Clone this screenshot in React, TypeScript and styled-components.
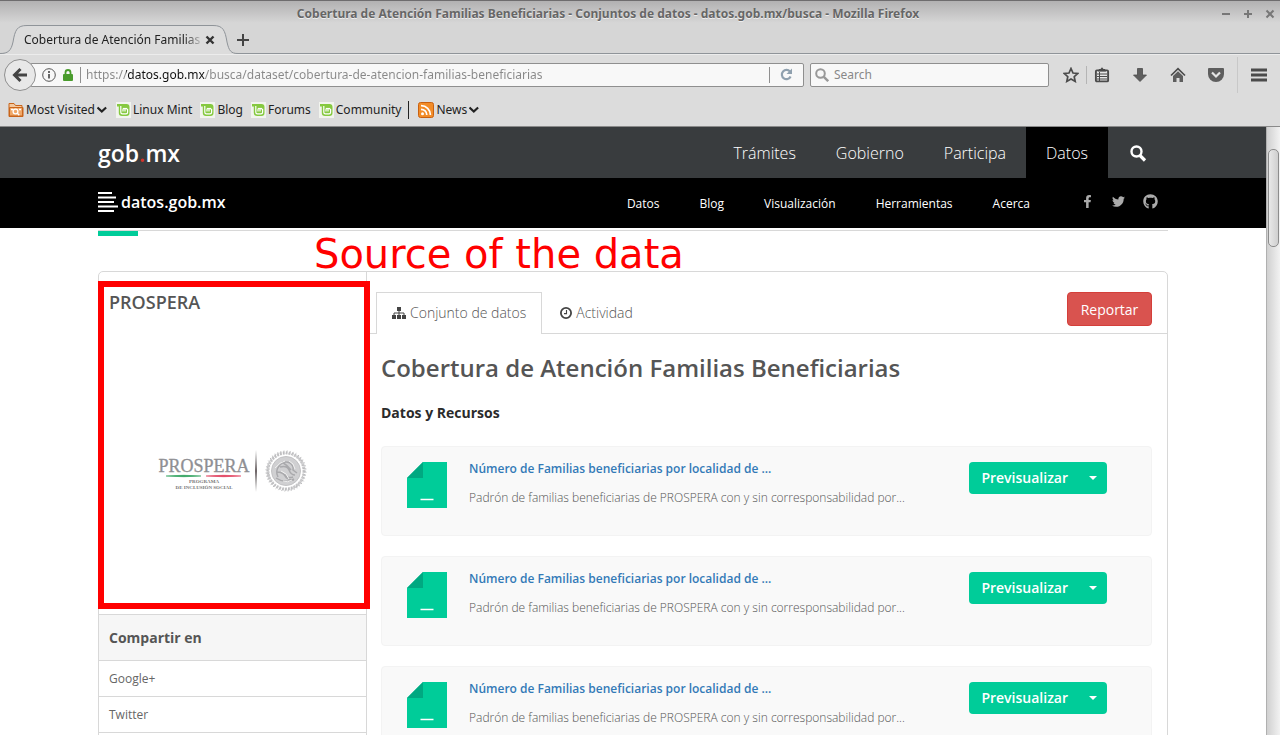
import React from "react";
import styled, { createGlobalStyle, css } from "styled-components";
import { FaFacebookF, FaTwitter, FaGithub } from "react-icons/fa";

const uiFont = '"Noto Sans", "DejaVu Sans", sans-serif';
const webFont = '"Open Sans", "Noto Sans", sans-serif';
const line = "#d8d8d8";
const teal = "#00cc99";

const GlobalStyle = createGlobalStyle`
  *, *::before, *::after { box-sizing: border-box; }
  body { margin: 0; font-family: ${webFont}; color: #555; background: #fff; }
  h1, h2, h3, p, ul { margin: 0; padding: 0; }
  ul { list-style: none; }
  a { color: inherit; text-decoration: none; }
  button { font: inherit; color: inherit; border: 0; padding: 0; background: none; cursor: pointer; }
  svg { display: block; flex: none; }
`;

const Window = styled.div`
  display: flex;
  flex-direction: column;
  height: 100vh;
  overflow: hidden;
`;

/* ---------- browser chrome ---------- */

const Chrome = styled.header`
  flex: none;
  font-family: ${uiFont};
  font-size: 12px;
  line-height: 16px;
  color: #222;
  background: #dcdcdc;
  border-bottom: 1px solid #8a8a8a;
`;

const TitleBar = styled.div`
  display: grid;
  grid-template-columns: 1fr 64px;
  align-items: center;
  height: 25px;
  padding-top: 2px;
  border-top: 1px solid #6e6c6e;
  background: linear-gradient(#b2b1b2, #d6d6d6 22px);
`;

const WindowTitle = styled.div`
  text-align: center;
  font-weight: 700;
  color: #666;
  text-shadow: 0 1px 0 #eee;
  white-space: nowrap;
  overflow: hidden;
`;

const WindowButtons = styled.div`
  display: flex;
  justify-content: flex-end;
  gap: 12px;
  padding-right: 5px;
`;

const TabStrip = styled.div`
  display: flex;
  align-items: stretch;
  height: 29px;
  background: #d6d6d6;
  box-shadow: inset 0 -1px 0 #8f9499;
`;

const BrowserTab = styled.div`
  position: relative;
  display: flex;
  align-items: center;
  gap: 4px;
  width: 236px;
  padding: 0 21px 0 24px;
`;

const TabShape = styled.svg`
  position: absolute;
  left: 0;
  top: 0;
`;

const TabLabel = styled.span`
  position: relative;
  flex: 1;
  white-space: nowrap;
  mask-image: linear-gradient(to right, #000 160px, transparent 180px);
`;

const TabClose = styled.button`
  position: relative;
`;

const NavBar = styled.div`
  display: flex;
  align-items: center;
  height: 40px;
  padding: 0 13px 0 4px;
  border-top: 1px solid #ececec;
`;

const BackButton = styled.button`
  position: relative;
  z-index: 1;
  flex: none;
  display: grid;
  place-items: center;
  width: 32px;
  height: 32px;
  border: 1px solid #8f8f8f;
  border-radius: 50%;
  background: #e8e8e8;
`;

const Field = styled.div<{ $url?: boolean }>`
  display: flex;
  align-items: center;
  height: 24px;
  border: 1px solid #8f8f8f;
  border-radius: 2px;
  background: #f8f8f8;
  ${(p) =>
    p.$url
      ? css`
          flex: 1;
          margin-left: -6px;
          margin-right: 6px;
          padding: 0 10px 0 11px;
        `
      : css`
          width: 239px;
          gap: 5px;
          padding: 0 4px;
          margin-right: 14px;
        `}
`;

const TextInput = styled.input`
  flex: 1;
  min-width: 0;
  border: 0;
  outline: 0;
  padding: 0;
  background: none;
  font: 12px/16px ${uiFont};
  color: #888;
  &::placeholder {
    color: #888;
    opacity: 1;
  }
`;

const UrlInput = styled(TextInput)`
  margin-left: 5px;
  background: linear-gradient(to right, #888 40px, #111 40px, #111 119px, #888 119px);
  background-clip: text;
  -webkit-background-clip: text;
  -webkit-text-fill-color: transparent;
`;

const Rule = styled.span<{ $h: number; $c?: string }>`
  flex: none;
  width: 1px;
  height: ${(p) => p.$h}px;
  background: ${(p) => p.$c ?? "#8f8f8f"};
`;

const Tools = styled.div`
  display: flex;
  align-items: center;
  gap: 22px;
  color: #4b4b4b;
`;

const ToolPair = styled.div<{ $gap?: number }>`
  display: flex;
  align-items: center;
  gap: ${(p) => p.$gap ?? 7}px;
`;

const MenuTools = styled.div`
  display: flex;
  align-items: center;
  gap: 13px;
  margin-left: -9px;
`;

const Bookmarks = styled.nav`
  display: flex;
  align-items: center;
  height: 32px;
  padding: 0 8px;
`;

const Bookmark = styled.a`
  display: flex;
  align-items: center;
  gap: 2px;
  margin-right: 7px;
  white-space: nowrap;
`;

const BookmarkRule = styled(Rule)`
  margin-right: 9px;
`;

/* ---------- web page ---------- */

const Viewport = styled.div`
  flex: 1;
  min-height: 0;
  display: flex;
`;

const Page = styled.div`
  flex: 1;
  min-width: 0;
  overflow: hidden;
`;

const ScrollTrack = styled.div`
  flex: none;
  width: 14px;
  padding: 22px 1px 0;
  border-left: 1px solid #b0b0b0;
  background: linear-gradient(to right, #d0d0d0, #f2f2f2);
`;

const ScrollThumb = styled.div`
  height: 98px;
  border: 1px solid #8c8c8c;
  border-radius: 5px;
  background: linear-gradient(to right, #e8e8e8, #cfcfcf);
`;

const Container = styled.div`
  max-width: 1070px;
  margin: 0 auto;
`;

const GovBar = styled.div`
  background: #393c3e;
`;

const DataBar = styled.div`
  background: #000;
  color: #fff;
`;

const BarRow = styled(Container)`
  display: flex;
  align-items: center;
  justify-content: space-between;
  height: 51px;
`;

const DataRow = styled(BarRow)`
  height: 50px;
  padding-bottom: 2px;
`;

const GovLogo = styled.a`
  font-size: 23px;
  line-height: 32px;
  font-weight: 600;
  color: #fff;
  em {
    font-style: normal;
    color: #d0352b;
  }
`;

const GovNav = styled.nav`
  display: flex;
  align-self: stretch;
`;

const GovLink = styled.a<{ $active?: boolean }>`
  display: flex;
  align-items: center;
  padding: 0 20px;
  font-size: 16px;
  line-height: 24px;
  font-weight: 300;
  color: #fff;
  background: ${(p) => (p.$active ? "#000" : "transparent")};
`;

const DataLogo = styled.a`
  display: flex;
  align-items: center;
  gap: 3px;
  font-size: 16px;
  line-height: 20px;
  font-weight: 600;
`;

const DataNav = styled.nav`
  display: flex;
  align-items: center;
  gap: 40px;
  padding-top: 4px;
  font-size: 12px;
  line-height: 16px;
`;

const Social = styled.div`
  display: flex;
  align-items: center;
  gap: 18px;
  padding: 0 10px 6px 11px;
  color: #aaa;
`;

const Heading = styled(Container)`
  position: relative;
  height: 43px;
  padding-top: 2px;
  &::before {
    content: "";
    display: block;
    border-top: 1px solid ${line};
  }
  &::after {
    content: "";
    display: block;
    width: 40px;
    height: 5px;
    background: ${teal};
  }
`;

const Note = styled.p`
  position: absolute;
  left: 216px;
  top: 2px;
  font: 40px/48px "DejaVu Sans", sans-serif;
  color: #f00;
  white-space: nowrap;
`;

const Card = styled(Container)`
  display: flex;
  border: 1px solid ${line};
  border-radius: 5px;
`;

const Sidebar = styled.aside`
  flex: none;
  width: 268px;
  border-right: 1px solid ${line};
`;

const Organization = styled.section`
  position: relative;
  display: flex;
  flex-direction: column;
  height: 342px;
  padding: 18px 10px 0;
`;

const NoteFrame = styled.div`
  position: absolute;
  inset: 9px -4px 5px -1px;
  border: 6px solid #f00;
`;

const OrgName = styled.h2`
  font-size: 18px;
  line-height: 24px;
  font-weight: 600;
`;

const OrgLogo = styled.svg`
  margin: 135px auto 0;
`;

const ShareTitle = styled.h3`
  padding: 12px 10px 11px;
  border-top: 1px solid ${line};
  border-bottom: 1px solid ${line};
  background: #f6f6f6;
  font-size: 14px;
  line-height: 22px;
`;

const ShareItem = styled.li`
  padding: 10px 10px 9px;
  border-bottom: 1px solid ${line};
  font-size: 12px;
  line-height: 16px;
  color: #666;
`;

const Main = styled.main`
  flex: 1;
  min-width: 0;
`;

const Tabs = styled.div`
  display: flex;
  align-items: flex-end;
  height: 62px;
  padding: 0 15px 0 9px;
  box-shadow: inset 0 -1px 0 ${line};
`;

const Tab = styled.a<{ $active?: boolean }>`
  display: flex;
  align-items: center;
  gap: 4px;
  height: 42px;
  padding: 0 15px 1px;
  border: 1px solid ${(p) => (p.$active ? line : "transparent")};
  border-bottom: 0;
  background: ${(p) => (p.$active ? "#fff" : "transparent")};
  margin-right: 2px;
  font-size: 14px;
  line-height: 20px;
  font-weight: 300;
  svg {
    color: #444;
  }
`;

const ReportButton = styled.button`
  margin: 0 0 8px auto;
  height: 34px;
  min-width: 85px;
  padding: 0 12px;
  border: 1px solid #d43f3a;
  border-radius: 4px;
  background: #d9534f;
  color: #fff;
  font-size: 14px;
`;

const Body = styled.div`
  padding: 18px 15px 0 14px;
`;

const Title = styled.h1`
  font-size: 24px;
  line-height: 32px;
  font-weight: 600;
`;

const Subtitle = styled.h2`
  margin: 19px 0 23px;
  font-size: 14px;
  line-height: 20px;
  font-weight: 700;
  color: #2b2b2b;
`;

const Resource = styled.li`
  display: flex;
  align-items: flex-start;
  height: 90px;
  margin-bottom: 20px;
  padding: 15px 44px 0 25px;
  border: 1px solid #f3f3f3;
  border-radius: 4px;
  background: #f9f9f9;
`;

const ResourceText = styled.div`
  flex: 1;
  min-width: 0;
  margin-left: 22px;
  font-size: 12px;
  line-height: 16px;
`;

const ResourceLink = styled.a`
  display: block;
  line-height: 14px;
  font-weight: 600;
  color: #337ab7;
`;

const ResourceInfo = styled.p`
  margin-top: 14px;
  font-weight: 300;
  color: #555;
`;

const ButtonGroup = styled.div`
  display: flex;
  height: 32px;
  border-radius: 4px;
  background: ${teal};
  color: #fff;
  font-size: 14px;
  font-weight: 600;
`;

const PreviewButton = styled.button`
  padding: 0 12px 2px;
`;

const CaretButton = styled.button`
  padding: 0 10px 0 9px;
`;

/* ---------- drawings ---------- */

const MintIcon = () => (
  <svg width="16" height="16" viewBox="0 0 16 16">
    <rect x="1" width="15" height="16" fill="#f2f4ee" />
    <path d="M2 2h9.500q3 0 3 3v6q0 3-3 3H7q-3.200 0-3.200-3V4.600H2z" fill="#86c940" />
    <path d="M5.800 4v6.200q0 1.600 1.600 1.600h3.600q1.600 0 1.600-1.600V7M8 9.500V7.600q0-1.200 1-1.200t1 1.200v1.900M10 7.600q0-1.200 1-1.200t1.300 1.200" fill="none" stroke="#fff" strokeWidth="1.200" />
  </svg>
);

const FolderIcon = () => (
  <svg width="16" height="16" viewBox="0 0 16 16">
    <path d="M1 1.500h5l1.500 2H14v2h1v9H1z" fill="#f3c9a0" stroke="#c9651b" />
    <path d="M1.500 5.500h13v8.500h-13z" fill="#f0a868" stroke="#c9651b" />
    <circle cx="7.500" cy="9.500" r="2.400" fill="none" stroke="#fff" strokeWidth="1.300" />
    <path d="M9.300 11.300l2 2M3 7.500h2M11 7.500h2" stroke="#fff" strokeWidth="1.300" />
  </svg>
);

const RssIcon = () => (
  <svg width="16" height="16" viewBox="0 0 16 16">
    <rect x=".5" y=".5" width="15" height="15" rx="2" fill="#f28c28" stroke="#c9600f" />
    <circle cx="4.500" cy="11.700" r="1.500" fill="#fff" />
    <path d="M3 7.300a5.700 5.700 0 0 1 5.800 5.800M3 3.700a9.300 9.300 0 0 1 9.400 9.400" fill="none" stroke="#fff" strokeWidth="1.700" />
  </svg>
);

const Chevron = () => (
  <svg width="11" height="8" viewBox="0 0 11 8">
    <path d="M.5 1.500l4.300 4 4.300-4" fill="none" stroke="#222" strokeWidth="2.200" />
  </svg>
);

const FileIcon = () => (
  <svg width="40" height="46" viewBox="0 0 40 46">
    <path d="M16 0h24v46H0V16z" fill={teal} />
    <path d="M16 0v16H0z" fill="#00a881" />
    <path d="M13.500 37.500h13" stroke="#fff" strokeWidth="1.500" />
  </svg>
);

const SitemapIcon = () => (
  <svg width="14" height="12" viewBox="0 0 14 12" fill="currentColor">
    <path d="M5 0h4v4H5zM0 8h4v4H0zM5 8h4v4H5zM10 8h4v4h-4z" />
    <path d="M7 3v6M2 9V6h10v3" fill="none" stroke="currentColor" />
  </svg>
);

const Seal = () => {
  const ticks = Array.from({ length: 40 }, (_, i) => (i * Math.PI) / 20);
  return (
    <g transform="translate(128 22)" fill="none" stroke="#bcbcbe">
      <circle r="14.500" fill="#d0d0d2" stroke="#c2c2c4" />
      <path d="M-8 6q-3-6 1-11 5-6 11-3 4 3 3 7l4 3M-6-4q7-2 9 3t6 5M-9 1q6 0 8 4t9 4M-10 7q9 6 18 1M-4-9q5 3 9 8M-1 3q2 5 8 3" strokeWidth="1.500" stroke="#a9a9ac" />
      <path d="M-11-3q5-6 10-7M-5 0q6 2 8 8M3-10q5 2 6 8M-3 10q5 2 9-1" strokeWidth="1" stroke="#f0f0f0" />
      <circle r="18" strokeWidth="3" strokeDasharray="2 1" stroke="#c9c9cb" />
      {ticks.map((a, i) => (
        <path key={i} d={`M${Math.cos(a) * 17} ${Math.sin(a) * 17}L${Math.cos(a + 0.06) * 20.5} ${Math.sin(a + 0.06) * 20.5}`} strokeWidth="1" />
      ))}
    </g>
  );
};

const ProsperaLogo = () => (
  <OrgLogo width="150" height="44" viewBox="0 0 150 44" role="img" aria-label="PROSPERA Programa de Inclusión Social">
    <defs>
      <linearGradient id="bar" x1="0" y1="0" x2="0" y2="1">
        <stop offset="0" stopColor="#777" stopOpacity="0" />
        <stop offset=".5" stopColor="#6b6264" />
        <stop offset="1" stopColor="#777" stopOpacity="0" />
      </linearGradient>
    </defs>
    <g fontFamily='"Liberation Serif", serif' fill="#8f8f93" textAnchor="middle">
      <text x="46" y="23" fontSize="18" stroke="#8f8f93" strokeWidth=".3">PROSPERA</text>
      <text x="46" y="34" fontSize="5" fontWeight="700" fill="#777">PROGRAMA</text>
      <text x="46" y="40" fontSize="5" fontWeight="700" fill="#777">DE INCLUSIÓN SOCIAL</text>
    </g>
    <path d="M8 27q18-1.500 35 0-17 1.500-35 0z" fill="#1f9a50" stroke="#1f9a50" strokeWidth=".5" />
    <path d="M48 27q18-1.500 35 0-17 1.500-35 0z" fill="#df2f4f" stroke="#df2f4f" strokeWidth=".5" />
    <rect x="97" y="1" width="2" height="42" fill="url(#bar)" />
    <Seal />
  </OrgLogo>
);

const bookmarks = ["Linux Mint", "Blog", "Forums", "Community"];
const resources = [1, 2, 3];

export default function App() {
  return (
    <Window>
      <GlobalStyle />
      <Chrome>
        <TitleBar>
          <WindowTitle>
            Cobertura de Atención Familias Beneficiarias - Conjuntos de datos - datos.gob.mx/busca - Mozilla Firefox
          </WindowTitle>
          <WindowButtons>
            <button aria-label="Minimize">
              <svg width="10" height="10" viewBox="0 0 10 10"><path d="M1 5h8" stroke="#777" strokeWidth="2" /></svg>
            </button>
            <button aria-label="Maximize">
              <svg width="10" height="10" viewBox="0 0 10 10"><path d="M1 5h8M5 1v8" stroke="#777" strokeWidth="2" /></svg>
            </button>
            <button aria-label="Close">
              <svg width="10" height="10" viewBox="0 0 10 10"><path d="M1.500 1.500l7 7M8.500 1.500l-7 7" stroke="#777" strokeWidth="2" /></svg>
            </button>
          </WindowButtons>
        </TitleBar>
        <TabStrip>
          <BrowserTab>
            <TabShape width="240" height="29" viewBox="0 0 240 29">
              <path d="M0 28.500C8 28.500 11 26 13 17C15 5 17 .5 27 .5H213C223 .5 225 5 227 17C229 26 231 28.500 238 28.500V30H0z" fill="#dcdcdc" />
              <path d="M0 28.500C8 28.500 11 26 13 17C15 5 17 .5 27 .5H213C223 .5 225 5 227 17C229 26 231 28.500 238 28.500" fill="none" stroke="#8f9499" />
            </TabShape>
            <TabLabel>Cobertura de Atención Familias</TabLabel>
            <TabClose aria-label="Close tab">
              <svg width="10" height="10" viewBox="0 0 10 10"><path d="M1.500 1.500l7 7M8.500 1.500l-7 7" stroke="#333" strokeWidth="2.400" /></svg>
            </TabClose>
          </BrowserTab>
          <button aria-label="New tab">
            <svg width="14" height="14" viewBox="0 0 14 14"><path d="M1 7h12M7 1v12" stroke="#444" strokeWidth="2" /></svg>
          </button>
        </TabStrip>
        <NavBar>
          <BackButton aria-label="Back">
            <svg width="16" height="16" viewBox="0 0 16 16"><path d="M15 8H3M8.500 2L2.500 8l6 6" fill="none" stroke="#444" strokeWidth="3" /></svg>
          </BackButton>
          <Field $url>
            <ToolPair>
              <svg width="14" height="14" viewBox="0 0 14 14">
                <circle cx="7" cy="7" r="6.300" fill="none" stroke="#555" />
                <path d="M7 3v2M7 6v4.500" stroke="#444" strokeWidth="1.600" />
              </svg>
              <svg width="10" height="12" viewBox="0 0 10 12">
                <path d="M2.500 6V3.500a2.500 2.500 0 0 1 5 0V6" fill="none" stroke="#4a9c2d" strokeWidth="1.800" />
                <rect y="5" width="10" height="7" rx="1" fill="#4a9c2d" />
              </svg>
              <Rule $h={16} />
            </ToolPair>
            <UrlInput
              aria-label="Address"
              defaultValue="https://datos.gob.mx/busca/dataset/cobertura-de-atencion-familias-beneficiarias"
            />
            <ToolPair $gap={10}>
              <Rule $h={16} />
              <button aria-label="Reload">
                <svg width="13" height="13" viewBox="0 0 13 13">
                  <path d="M10 3.600A4.600 4.600 0 1 0 10.600 8.600" fill="none" stroke="#8fa0ae" strokeWidth="2.200" />
                  <path d="M12 .5V6H6.500z" fill="#8fa0ae" />
                </svg>
              </button>
            </ToolPair>
          </Field>
          <Field>
            <svg width="14" height="14" viewBox="0 0 14 14" fill="none" stroke="#999">
              <circle cx="5.500" cy="5.500" r="4.300" strokeWidth="2" />
              <path d="M8.800 8.800l4.400 4.400" strokeWidth="2.400" />
            </svg>
            <TextInput aria-label="Search" placeholder="Search" />
          </Field>
          <Tools>
            <ToolPair>
              <button aria-label="Bookmark this page">
                <svg width="16" height="16" viewBox="0 0 16 16">
                  <path d="M8 1.500l2 4.500 4.700.5-3.500 3.200 1 4.700L8 12l-4.200 2.400 1-4.700L1.300 6.500 6 6z" fill="none" stroke="currentColor" strokeWidth="1.700" />
                </svg>
              </button>
              <Rule $h={18} $c="#b5b5b5" />
              <button aria-label="Show bookmarks">
                <svg width="16" height="16" viewBox="0 0 16 16">
                  <rect x="1.900" y="3.400" width="12.200" height="11" rx="1" fill="#e8e8e8" stroke="currentColor" strokeWidth="1.900" />
                  <path d="M4 4.500L5 2h1.500L8 .3 9.500 2H11l1 2.500z" fill="currentColor" />
                  <path d="M3 7h10M3 9.500h10M3 12h10" stroke="currentColor" strokeWidth="1" />
                  <path d="M5.500 5v9" stroke="currentColor" />
                </svg>
              </button>
            </ToolPair>
            <button aria-label="Downloads">
              <svg width="16" height="16" viewBox="0 0 16 16"><path d="M5.500 1.500h5V8H14.500L8 14.500 1.500 8h4z" fill="#5e5e5e" stroke="currentColor" strokeWidth=".8" /></svg>
            </button>
            <button aria-label="Home">
              <svg width="16" height="16" viewBox="0 0 16 16">
                <path d="M1 8.500l7-6.800 7 6.800" fill="none" stroke="currentColor" strokeWidth="1.700" />
                <path d="M3 9l5-4.800L13 9v6H9.500v-4h-3v4H3z" fill="#5e5e5e" />
              </svg>
            </button>
            <button aria-label="Pocket">
              <svg width="16" height="16" viewBox="0 0 16 16">
                <path d="M1 1h14q1 0 1 1v5a8 8 0 0 1-16 0V2q0-1 1-1z" fill="#5e5e5e" />
                <path d="M4 5.500l4 4 4-4" fill="none" stroke="#e4e4e4" strokeWidth="2.200" />
              </svg>
            </button>
            <MenuTools>
              <Rule $h={36} $c="#c8c8c8" />
              <button aria-label="Open menu">
                <svg width="16" height="14" viewBox="0 0 16 14"><path d="M0 2h16M0 7h16M0 12h16" stroke="currentColor" strokeWidth="3" /></svg>
              </button>
            </MenuTools>
          </Tools>
        </NavBar>
        <Bookmarks>
          <Bookmark href="#"><FolderIcon />Most Visited<Chevron /></Bookmark>
          {bookmarks.map((b) => (
            <Bookmark href="#" key={b}><MintIcon />{b}</Bookmark>
          ))}
          <BookmarkRule $h={18} $c="#222" />
          <Bookmark href="#"><RssIcon />News<Chevron /></Bookmark>
        </Bookmarks>
      </Chrome>

      <Viewport>
        <Page>
          <GovBar>
            <BarRow>
              <GovLogo href="#">gob<em>.</em>mx</GovLogo>
              <GovNav>
                <GovLink href="#">Trámites</GovLink>
                <GovLink href="#">Gobierno</GovLink>
                <GovLink href="#">Participa</GovLink>
                <GovLink href="#" $active>Datos</GovLink>
                <GovLink href="#" aria-label="Buscar">
                  <svg width="20" height="18" viewBox="0 0 20 18" fill="none" stroke="#fff">
                    <circle cx="8.500" cy="7.500" r="5" strokeWidth="2.400" />
                    <path d="M12 11.500l5 5" strokeWidth="3.200" />
                  </svg>
                </GovLink>
              </GovNav>
            </BarRow>
          </GovBar>
          <DataBar>
            <DataRow>
              <DataLogo href="#">
                <svg width="20" height="20" viewBox="0 0 20 20">
                  <path d="M0 1h14M0 5.500h18M0 10h16M0 14.500h20M0 19h16" stroke="#fff" strokeWidth="2" />
                </svg>
                datos.gob.mx
              </DataLogo>
              <DataNav>
                <a href="#">Datos</a>
                <a href="#">Blog</a>
                <a href="#">Visualización</a>
                <a href="#">Herramientas</a>
                <a href="#">Acerca</a>
                <Social>
                  <a href="#" aria-label="Facebook"><FaFacebookF size={13} /></a>
                  <a href="#" aria-label="Twitter"><FaTwitter size={13} /></a>
                  <a href="#" aria-label="GitHub"><FaGithub size={15} /></a>
                </Social>
              </DataNav>
            </DataRow>
          </DataBar>

          <Heading>
            <Note>Source of the data</Note>
          </Heading>

          <Card>
            <Sidebar>
              <Organization>
                <OrgName>PROSPERA</OrgName>
                <ProsperaLogo />
                <NoteFrame />
              </Organization>
              <ShareTitle>Compartir en</ShareTitle>
              <ul>
                <ShareItem><a href="#">Google+</a></ShareItem>
                <ShareItem><a href="#">Twitter</a></ShareItem>
              </ul>
            </Sidebar>
            <Main>
              <Tabs>
                <Tab href="#" $active><SitemapIcon />Conjunto de datos</Tab>
                <Tab href="#">
                  <svg width="12" height="12" viewBox="0 0 12 12" fill="none" stroke="currentColor">
                    <circle cx="6" cy="6" r="5.100" strokeWidth="1.800" />
                    <path d="M6.500 3v3.600H4" strokeWidth="1.100" />
                  </svg>
                  Actividad
                </Tab>
                <ReportButton>Reportar</ReportButton>
              </Tabs>
              <Body>
                <Title>Cobertura de Atención Familias Beneficiarias</Title>
                <Subtitle>Datos y Recursos</Subtitle>
                <ul>
                  {resources.map((r) => (
                    <Resource key={r}>
                      <FileIcon />
                      <ResourceText>
                        <ResourceLink href="#">Número de Familias beneficiarias por localidad de ...</ResourceLink>
                        <ResourceInfo>Padrón de familias beneficiarias de PROSPERA con y sin corresponsabilidad por...</ResourceInfo>
                      </ResourceText>
                      <ButtonGroup>
                        <PreviewButton>Previsualizar</PreviewButton>
                        <CaretButton aria-label="Más opciones">
                          <svg width="8" height="4" viewBox="0 0 8 4"><path d="M0 0h8L4 4z" fill="#fff" /></svg>
                        </CaretButton>
                      </ButtonGroup>
                    </Resource>
                  ))}
                </ul>
              </Body>
            </Main>
          </Card>
        </Page>
        <ScrollTrack>
          <ScrollThumb />
        </ScrollTrack>
      </Viewport>
    </Window>
  );
}
